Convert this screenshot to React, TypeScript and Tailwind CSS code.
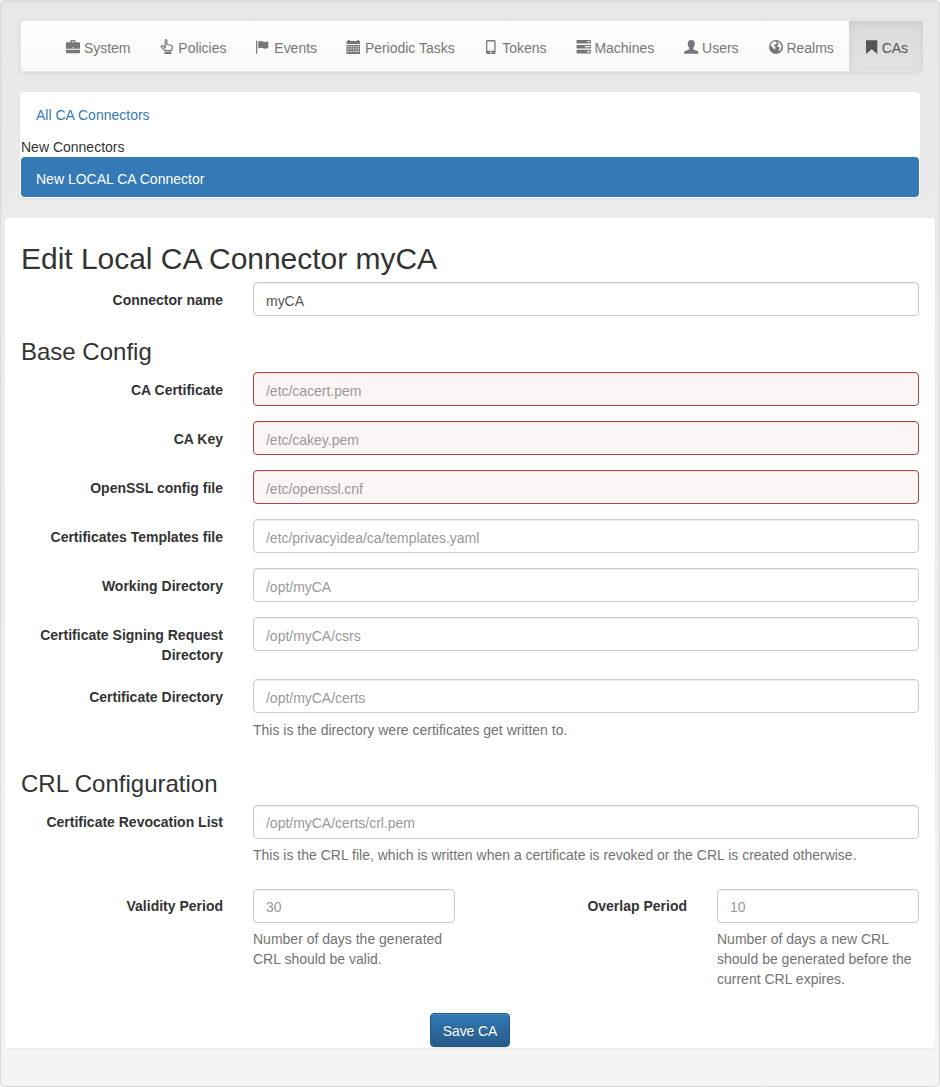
import React from 'react';

type IconProps = { children: React.ReactNode };

function Glyph({ children }: IconProps) {
  return (
    <svg viewBox="0 0 14 14" className="relative -top-px inline-block h-3.5 w-3.5 align-[-2px] overflow-visible" fill="currentColor">
      {children}
    </svg>
  );
}

const icons = {
  system: (
    <Glyph>
      <path fillRule="evenodd" d="M4.500 2.300V1Q4.500.1 5.400.1h3.200Q9.500.1 9.500 1v1.300h3.700q.8 0 .8.8v5.600H0V3.100q0-.8.8-.8zM5.800 2.300h2.400V1.200H5.800zM6.300 7.500v.8h1.400v-.8z" />
      <path d="M0 9.800h14v2.700q0 .8-.8.8H.8q-.8 0-.8-.8z" />
    </Glyph>
  ),
  policies: (
    <Glyph>
      <path d="M5.200 8.400V1Q5.200-.4 6-.4t.9 1.300v3.400l4.300 1.200q1.200.4 1.200 1.600 0 1-.8 2.200v1.400H5L1.300 7.100Q.8 6.400 1.400 5.900t1.400-.2l2.400 2" fill="none" stroke="currentColor" strokeWidth="1.200" />
      <path d="M4.400 11.700h6.900v2.200H5.200q-.8 0-.8-.7z" />
    </Glyph>
  ),
  events: (
    <Glyph>
      <path d="M0 .8h1.200v13H0zM2.200 1.500q2.900-1.100 5.400.2 2.200 1 4.700-.4v6.400q-2.400 1.600-5 .5-2.300-1-5.100.4z" />
    </Glyph>
  ),
  tasks: (
    <Glyph>
      <path fillRule="evenodd" d="M1 0h1.800v1h7.400V0H12v1h1v3H-.5V1H1zM-.5 5H13v9H-.5zM.6 6.300v.9h1.600v-.9zM3.200 6.300v.9h1.500v-.9zM5.700 6.300v.9h1.500v-.9zM8.200 6.300v.9h1.400v-.9zM10.600 6.300v.9h1.500v-.9zM.6 8.600v.9h1.600v-.9zM3.200 8.600v.9h1.500v-.9zM5.700 8.600v.9h1.500v-.9zM8.200 8.600v.9h1.400v-.9zM10.600 8.600v.9h1.500v-.9zM.6 11v.9h1.600V11zM3.200 11v.9h1.500V11zM5.700 11v.9h1.500V11zM8.200 11v.9h1.400V11zM10.600 11v.9h1.500V11z" />
    </Glyph>
  ),
  tokens: (
    <Glyph>
      <path fillRule="evenodd" d="M2.500 0h6.600q1.500 0 1.500 1.400v11.200q0 1.400-1.500 1.400H2.500Q1 14 1 12.600V1.400Q1 0 2.500 0zM2.300 1.400v9.300h7V1.400zM4.800 11.700v1.200h2v-1.200z" />
    </Glyph>
  ),
  machines: (
    <Glyph>
      <path fillRule="evenodd" d="M.3 0h12.900q.8 0 .8.8v2q0 .8-.8.8H.3q-.8 0-.8-.8v-2Q-.5 0 .3 0zM10.400 1.100v1.200h2.400V1.100zM.3 4.900h12.900q.8 0 .8.8v2q0 .8-.8.8H.3q-.8 0-.8-.8v-2q0-.8.8-.8zM7.800 6.100v1.200h5V6.100zM.3 9.800h12.900q.8 0 .8.8v2q0 .8-.8.8H.3q-.8 0-.8-.8v-2q0-.8.8-.8zM10 11v1.200h2.800V11z" />
    </Glyph>
  ),
  users: (
    <Glyph>
      <path d="M7.200 0c2.300 0 3.600 1.400 3.600 3.300 0 1.700-.5 3.300-1.500 4.400v1.200c0 .6.300.8 1 1l2.600.9c1 .4 1.500.9 1.500 1.700v1.300H.1v-1.300c0-.8.5-1.300 1.500-1.700l2.600-.9c.7-.2 1-.4 1-1V7.700c-1-1.100-1.500-2.700-1.500-4.400C3.700 1.400 5 0 7.200 0z" />
    </Glyph>
  ),
  realms: (
    <Glyph>
      <path fillRule="evenodd" d="M7 0a7 7 0 1 1 0 14A7 7 0 0 1 7 0zM5.400 1.500 3.200 2.600 1.700 4.800l.5 1.800 1.700.9.900 1.600 1.100.4.700-1.600-.4-1.300-1.500-.7.900-1.100 1.700-.5.400-1.500-.9-1.300zM9 1.500l-.4 1.300 1 .8-.2 1.200-1.300.6.400 1.300 1.600.3.600 1.300-.9 1.900.3 1.300 1.700-1.900.7-2.400-.4-2.200-1.200-2z" />
    </Glyph>
  ),
  cas: (
    <Glyph>
      <path d="M2 .3h11.300v13.800L7.700 9.200 2 14.100z" />
    </Glyph>
  ),
};

const navItems: { label: string; icon: React.ReactNode; active?: boolean }[] = [
  { label: 'System', icon: icons.system },
  { label: 'Policies', icon: icons.policies },
  { label: 'Events', icon: icons.events },
  { label: 'Periodic Tasks', icon: icons.tasks },
  { label: 'Tokens', icon: icons.tokens },
  { label: 'Machines', icon: icons.machines },
  { label: 'Users', icon: icons.users },
  { label: 'Realms', icon: icons.realms },
  { label: 'CAs', icon: icons.cas, active: true },
];

function NavBar() {
  return (
    <nav className="mx-[19px] mb-5 flex h-[52px] rounded border border-[#e7e7e7] bg-linear-to-b from-white to-[#f8f8f8] bg-origin-border pl-[30px] tracking-[-0.018px] shadow-[inset_0_1px_0_rgba(255,255,255,0.15),0_1px_5px_rgba(0,0,0,0.075)]">
      {navItems.map((item) => (
        <a
          key={item.label}
          href="#"
          className={
            item.active
              ? 'h-[50px] shrink-0 whitespace-nowrap bg-linear-to-b from-[#dbdbdb] to-[#e2e2e2] px-[15px] pt-[17px] text-[#555] shadow-[inset_0_3px_9px_rgba(0,0,0,0.075)]'
              : 'h-[50px] shrink-0 whitespace-nowrap px-[15px] pt-[17px] text-[#777]'
          }
        >
          {item.icon} {item.label}
        </a>
      ))}
    </nav>
  );
}

function Field({ value, placeholder, invalid }: { value?: string; placeholder?: string; invalid?: boolean }) {
  return (
    <input
      defaultValue={value}
      placeholder={placeholder}
      className={
        invalid
          ? 'block h-[34px] w-full rounded border border-[#a94442] bg-[#fbf5f5] px-3 pt-2 pb-1 tracking-[-0.02px] text-[#555] shadow-[inset_0_1px_1px_rgba(0,0,0,0.075)] placeholder:text-[#999]'
          : 'block h-[34px] w-full rounded border border-[#ccc] bg-white px-3 pt-2 pb-1 tracking-[-0.02px] text-[#555] shadow-[inset_0_1px_1px_rgba(0,0,0,0.075)] placeholder:text-[#999]'
      }
    />
  );
}

function Label({ children }: { children: React.ReactNode }) {
  return <label className="w-[232px] shrink-0 px-[15px] pt-2 text-right font-bold">{children}</label>;
}

function Help({ children }: { children: React.ReactNode }) {
  return <p className="mt-[6px] mb-[9px] text-[#737373]">{children}</p>;
}

type RowProps = { label: string; value?: string; placeholder?: string; invalid?: boolean; help?: string };

function Row({ label, help, ...field }: RowProps) {
  return (
    <div className="-mx-[15px] flex">
      <Label>{label}</Label>
      <div className="flex-1 px-[15px]">
        <Field {...field} />
        {help && <Help>{help}</Help>}
      </div>
    </div>
  );
}

export default function App() {
  return (
    <div className="h-[1087px] rounded border border-[#dcdcdc] bg-linear-to-b from-[#e8e8e8] to-[#f4f4f4] pt-[19px] font-['Liberation_Sans',Arial,sans-serif] text-sm leading-5 text-[#333] shadow-[inset_0_1px_3px_rgba(0,0,0,0.05),0_1px_0_rgba(255,255,255,0.1)]">
      <NavBar />
      <div className="mx-[19px] mb-5 rounded border border-transparent bg-white shadow-[0_1px_2px_rgba(0,0,0,0.05)]">
        <a href="#" className="block px-[15px] pt-3 pb-2 text-[#337ab7]">
          All CA Connectors
        </a>
        <div className="mt-1">New Connectors</div>
        <a href="#" className="block rounded bg-[#337ab7] px-[15px] pt-3 pb-2 text-white">
          New LOCAL CA Connector
        </a>
      </div>
      <form className="mx-1 h-[830px] rounded border border-transparent bg-white px-[15px] pt-[23px] shadow-[0_1px_2px_rgba(0,0,0,0.05)]">
        <h2 className="mb-[7px] text-[30px] leading-[33px] font-medium tracking-[-0.03px]">Edit Local CA Connector myCA</h2>
        <Row label="Connector name" value="myCA" />
        <h3 className="mt-[23px] mb-[7px] text-2xl leading-[26px]">Base Config</h3>
        <div className="flex flex-col gap-[15px]">
          <Row label="CA Certificate" placeholder="/etc/cacert.pem" invalid />
          <Row label="CA Key" placeholder="/etc/cakey.pem" invalid />
          <Row label="OpenSSL config file" placeholder="/etc/openssl.cnf" invalid />
          <Row label="Certificates Templates file" placeholder="/etc/privacyidea/ca/templates.yaml" />
          <Row label="Working Directory" placeholder="/opt/myCA" />
          <div className="-mb-px">
            <Row label="Certificate Signing Request Directory" placeholder="/opt/myCA/csrs" />
          </div>
          <div className="-mx-[15px] flex">
            <Label>Certificate Directory</Label>
            <div className="flex-1 px-[15px]">
              <Field placeholder="/opt/myCA/certs" />
              <p className="mt-[7px] mb-2 text-[#737373]">This is the directory were certificates get written to.</p>
            </div>
          </div>
        </div>
        <h3 className="mt-[23px] mb-2 text-2xl leading-[26px]">CRL Configuration</h3>
        <div className="[&_input]:pt-[7px] [&_input]:pb-[5px] [&_label]:pt-[7px]">
          <Row
            label="Certificate Revocation List"
            placeholder="/opt/myCA/certs/crl.pem"
            help="This is the CRL file, which is written when a certificate is revoked or the CRL is created otherwise."
          />
          <div className="-mx-[15px] mt-[15px] flex">
            <Label>Validity Period</Label>
            <div className="w-[232px] px-[15px]">
              <Field placeholder="30" />
              <Help>Number of days the generated CRL should be valid.</Help>
            </div>
            <Label>Overlap Period</Label>
            <div className="w-[232px] px-[15px]">
              <Field placeholder="10" />
              <Help>Number of days a new CRL should be generated before the current CRL expires.</Help>
            </div>
          </div>
        </div>
        <div className="mt-[15px] flex justify-center">
          <button
            type="button"
            className="h-[34px] w-20 rounded border border-[#245580] bg-linear-to-b from-[#337ab7] to-[#265a88] pt-px tracking-[-0.1px] whitespace-nowrap text-white shadow-[inset_0_1px_0_rgba(255,255,255,0.15),0_1px_1px_rgba(0,0,0,0.075)] [text-shadow:0_-1px_0_rgba(0,0,0,0.2)]"
          >
            Save CA
          </button>
        </div>
      </form>
    </div>
  );
}
